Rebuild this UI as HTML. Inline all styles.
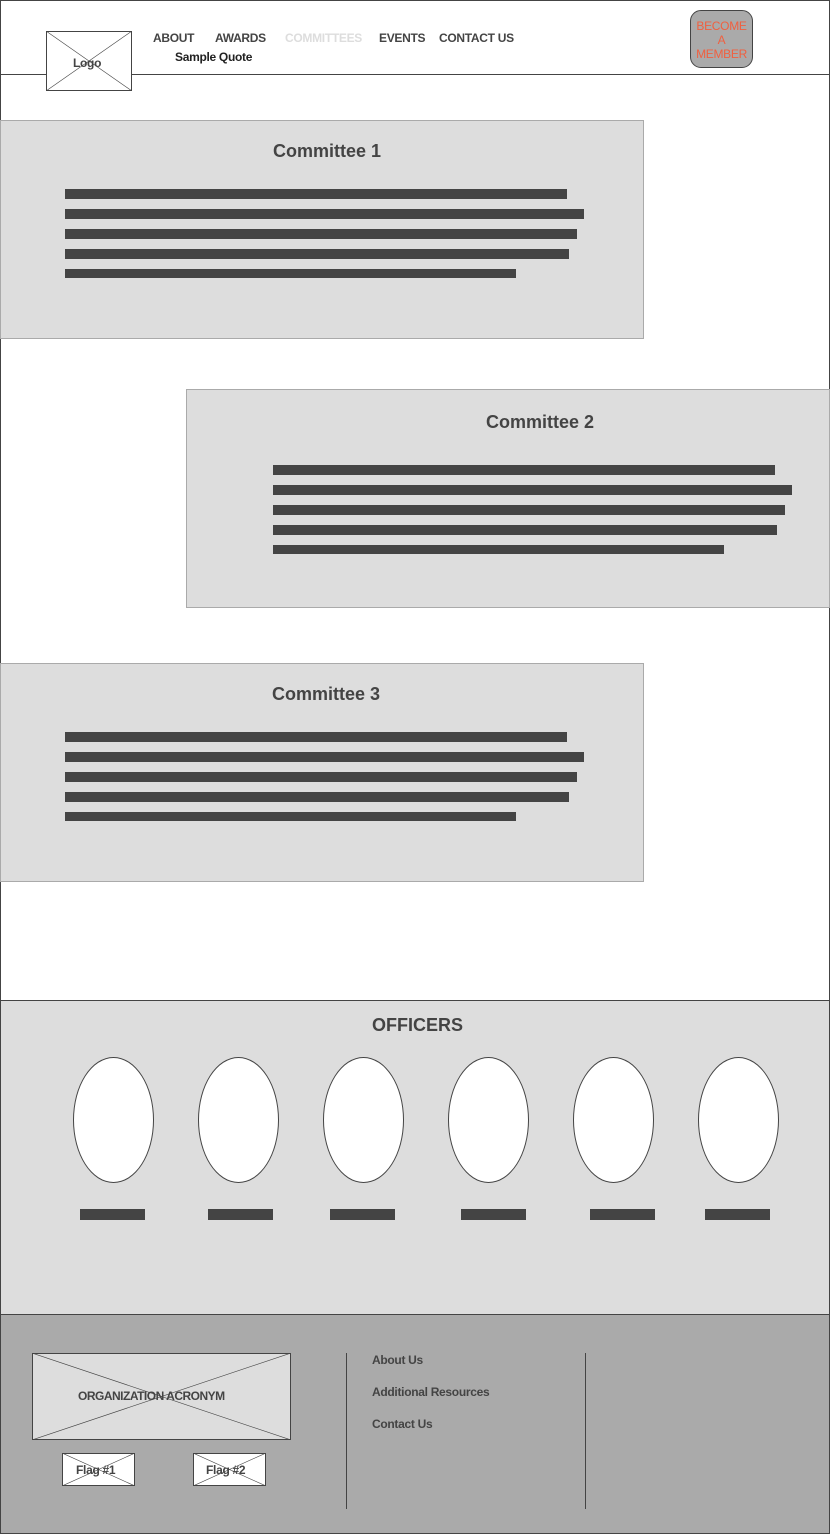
<!DOCTYPE html>
<html><head><style>
body{margin:0;width:832px;height:1536px;position:relative;background:#fff;font-family:"Liberation Sans",sans-serif;overflow:hidden}
.a{position:absolute}
.t{font-weight:bold;font-size:12px;color:#444;letter-spacing:-0.3px;white-space:nowrap}
.bar{position:absolute;background:#444;height:10px}
.card{position:absolute;background:#ddd;border:1px solid #aaa;box-sizing:border-box}
.h{position:absolute;font-weight:bold;font-size:18px;color:#444;width:100%;text-align:center}
.ov{position:absolute;width:81px;height:126px;border:1px solid #444;border-radius:50%;background:#fff;box-sizing:border-box;top:1057px}
.nb{position:absolute;top:1209px;width:65px;height:11px;background:#444}
</style></head><body>
<div class="a" style="left:0;top:0;width:830px;height:1534px;border:1px solid #444;box-sizing:border-box"></div>
<div class="a" style="left:0;top:74px;width:830px;height:1px;background:#444"></div>
<svg class="a" style="left:46px;top:31px" width="86" height="60"><rect x="0.5" y="0.5" width="85" height="59" fill="#fff" stroke="#444"/><line x1="0" y1="0" x2="86" y2="60" stroke="#444" stroke-width=".6"/><line x1="86" y1="0" x2="0" y2="60" stroke="#444" stroke-width=".6"/></svg>
<div class="a t" style="left:73px;top:56px">Logo</div>
<div class="a t" style="left:153px;top:31px">ABOUT</div>
<div class="a t" style="left:215px;top:31px">AWARDS</div>
<div class="a t" style="left:285px;top:31px;color:#ddd">COMMITTEES</div>
<div class="a t" style="left:379px;top:31px">EVENTS</div>
<div class="a t" style="left:439px;top:31px">CONTACT US</div>
<div class="a t" style="left:175px;top:50px;color:#222">Sample Quote</div>
<div class="a" style="left:690px;top:10px;width:63px;height:58px;background:#aaa;border:1px solid #444;border-radius:11px;box-sizing:border-box;color:#f06040;font-size:12px;text-align:center;line-height:14px;padding-top:8px;letter-spacing:-0.3px">BECOME<br>A<br>MEMBER</div>

<div class="card" style="left:0;top:120px;width:644px;height:219px"><div class="h" style="top:20px;left:5px">Committee 1</div></div>
<div class="bar" style="left:65px;top:189px;width:502px"></div><div class="bar" style="left:65px;top:209px;width:519px"></div><div class="bar" style="left:65px;top:229px;width:512px"></div><div class="bar" style="left:65px;top:249px;width:504px"></div><div class="bar" style="left:65px;top:269px;width:451px;height:9px"></div>

<div class="card" style="left:186px;top:389px;width:644px;height:219px"><div class="h" style="top:22px;left:32px">Committee 2</div></div>
<div class="bar" style="left:273px;top:465px;width:502px"></div><div class="bar" style="left:273px;top:485px;width:519px"></div><div class="bar" style="left:273px;top:505px;width:512px"></div><div class="bar" style="left:273px;top:525px;width:504px"></div><div class="bar" style="left:273px;top:545px;width:451px;height:9px"></div>

<div class="card" style="left:0;top:663px;width:644px;height:219px"><div class="h" style="top:20px;left:4px">Committee 3</div></div>
<div class="bar" style="left:65px;top:732px;width:502px"></div><div class="bar" style="left:65px;top:752px;width:519px"></div><div class="bar" style="left:65px;top:772px;width:512px"></div><div class="bar" style="left:65px;top:792px;width:504px"></div><div class="bar" style="left:65px;top:812px;width:451px;height:9px"></div>

<div class="a" style="left:0;top:1000px;width:830px;height:315px;background:#ddd;border-top:1px solid #444;border-left:1px solid #444;border-right:1px solid #444;box-sizing:border-box"></div>
<div class="a" style="left:0;top:1015px;width:835px;text-align:center;font-weight:bold;font-size:18px;color:#444">OFFICERS</div>
<div class="ov" style="left:73px"></div><div class="ov" style="left:198px"></div><div class="ov" style="left:323px"></div><div class="ov" style="left:448px"></div><div class="ov" style="left:573px"></div><div class="ov" style="left:698px"></div>
<div class="nb" style="left:80px"></div><div class="nb" style="left:208px"></div><div class="nb" style="left:330px"></div><div class="nb" style="left:461px"></div><div class="nb" style="left:590px"></div><div class="nb" style="left:705px"></div>

<div class="a" style="left:0;top:1314px;width:830px;height:220px;background:#aaa;border:1px solid #444;box-sizing:border-box"></div>
<svg class="a" style="left:32px;top:1353px" width="259" height="87"><rect x="0.5" y="0.5" width="258" height="86" fill="#ddd" stroke="#444"/><line x1="0" y1="0" x2="259" y2="87" stroke="#444" stroke-width=".6"/><line x1="259" y1="0" x2="0" y2="87" stroke="#444" stroke-width=".6"/></svg>
<div class="a t" style="left:78px;top:1389px;letter-spacing:-0.5px">ORGANIZATION ACRONYM</div>
<svg class="a" style="left:62px;top:1453px" width="73" height="33"><rect x="0.5" y="0.5" width="72" height="32" fill="#fff" stroke="#444"/><line x1="0" y1="0" x2="73" y2="33" stroke="#444" stroke-width=".6"/><line x1="73" y1="0" x2="0" y2="33" stroke="#444" stroke-width=".6"/></svg>
<svg class="a" style="left:193px;top:1453px" width="73" height="33"><rect x="0.5" y="0.5" width="72" height="32" fill="#fff" stroke="#444"/><line x1="0" y1="0" x2="73" y2="33" stroke="#444" stroke-width=".6"/><line x1="73" y1="0" x2="0" y2="33" stroke="#444" stroke-width=".6"/></svg>
<div class="a t" style="left:76px;top:1463px">Flag #1</div>
<div class="a t" style="left:206px;top:1463px">Flag #2</div>
<div class="a" style="left:346px;top:1353px;width:1px;height:156px;background:#444"></div>
<div class="a" style="left:585px;top:1353px;width:1px;height:156px;background:#444"></div>
<div class="a t" style="left:372px;top:1353px">About Us</div>
<div class="a t" style="left:372px;top:1385px">Additional Resources</div>
<div class="a t" style="left:372px;top:1417px">Contact Us</div>
</body></html>
